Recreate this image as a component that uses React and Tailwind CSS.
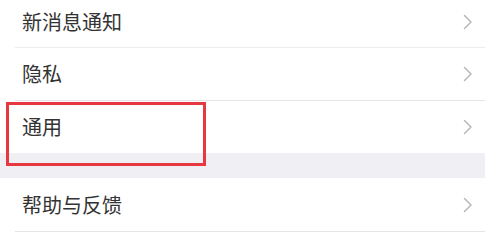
import React from "react";

const Chevron = () => (
  <svg width="10" height="16" viewBox="0 0 10 16" fill="none" className="shrink-0">
    <polyline points="1.5,1.5 8,8 1.5,14.5" stroke="#b8b8b8" strokeWidth="1.5" strokeLinecap="round" strokeLinejoin="round" />
  </svg>
);

const Row = ({ label, h = "h-[52px]", border = true, extra = "" }) => (
  <div className={`bg-white pl-[15px] ${extra}`}>
    <div className={`flex items-center justify-between pl-[7px] pr-[12px] ${h} ${border ? "border-b border-[#e5e5e5]" : ""}`}>
      <span className="text-[20px] leading-none text-[#333333]">{label}</span>
      <Chevron />
    </div>
  </div>
);

export default function App() {
  return (
    <div
      className="w-[485px] h-[245px] overflow-hidden bg-white flex flex-col"
      style={{ fontFamily: '"Noto Sans CJK SC", "Noto Sans", sans-serif' }}
    >
      <div className="bg-white pl-[15px]">
        <div className="flex items-center justify-between pl-[7px] pr-[12px] h-[48px] pb-[3px] border-b border-[#ececec]">
          <span className="text-[20px] leading-none text-[#333333]">新消息通知</span>
          <Chevron />
        </div>
      </div>
      <Row label="隐私" h="h-[53px]" />
      <div className="relative">
        <Row label="通用" h="h-[52px]" border={false} />
        <div className="h-[25px] bg-[#efeff4]" />
        <div className="absolute left-[6px] top-[1px] w-[200px] h-[64px] border-[3px] border-[#e8383f]" />
      </div>
      <Row label="帮助与反馈" h="h-[54px]" />
      <Row label="关于微信" h="h-[48px]" border={false} />
    </div>
  );
}
